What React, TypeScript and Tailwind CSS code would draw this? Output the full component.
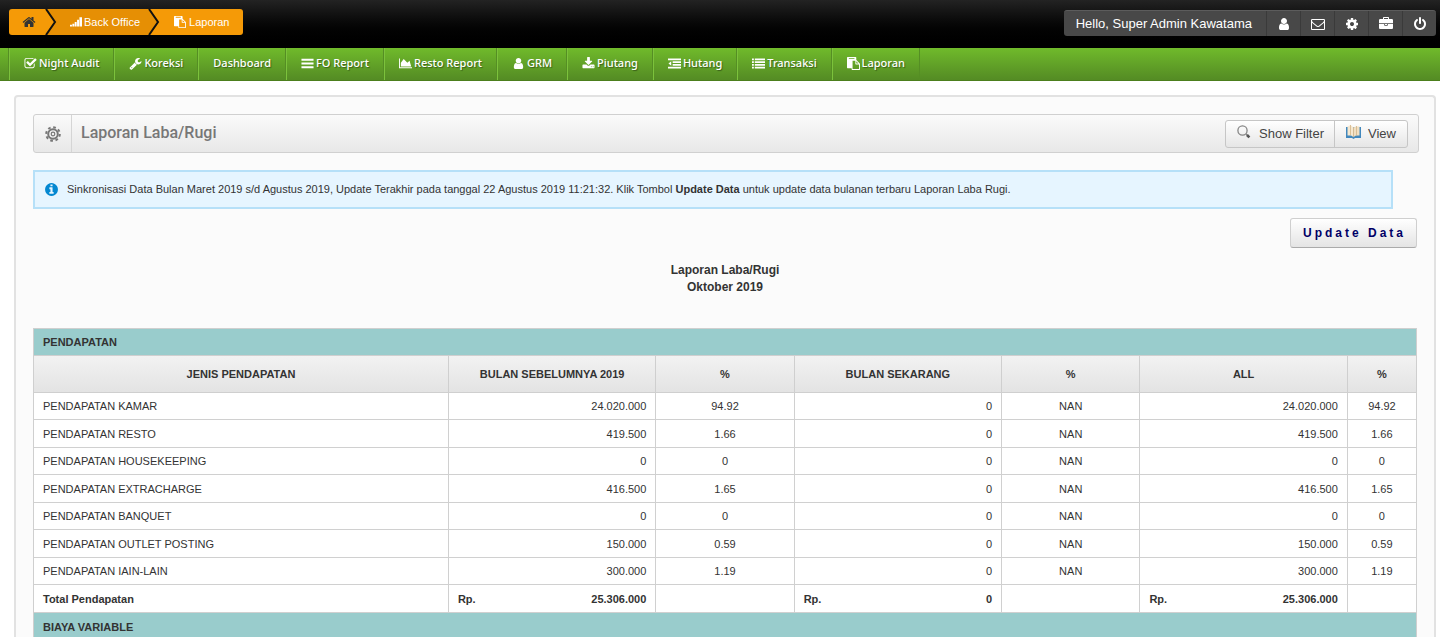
import React from 'react';
import { clsx } from 'clsx';

// Icon shapes, drawn on a 1792 grid
const ICONS = {
  home: 'M1472 992v480q0 26-19 45t-45 19h-384v-384h-256v384h-384q-26 0-45-19t-19-45v-480q0-1 .5-3t.5-3l575-474 575 474q1 2 1 6zm223-69l-62 74q-8 9-21 11h-3q-13 0-21-7l-692-577-692 577q-12 8-24 7-13-2-21-11l-62-74q-8-10-7-23.5t11-21.5l719-599q32-26 76-26t76 26l244 204v-195q0-14 9-23t23-9h192q14 0 23 9t9 23v408l219 182q10 8 11 21.5t-7 23.5z',
  signal: 'M0 1312h288v256h-288zM352 1152h288v416h-288zM704 896h288v672h-288zM1056 576h288v992h-288zM1408 192h384v1376h-384z',
  paste: 'M768 1664h896v-640h-416q-40 0-68-28t-28-68v-416h-384v1152zm256-1440v-64q0-13-9.5-22.5t-22.5-9.500h-704q-13 0-22.5 9.5t-9.5 22.5v64q0 13 9.5 22.5t22.5 9.500h704q13 0 22.5-9.5t9.5-22.5zm256 672h299l-299-299v299zm512 128v672q0 40-28 68t-68 28h-960q-40 0-68-28t-28-68v-160h-544q-40 0-68-28t-28-68v-1344q0-40 28-68t68-28h1088q40 0 68 28t28 68v328q21 13 36 28l408 408q28 28 48 76t20 88z',
  check: 'M1472 930v318q0 119-84.5 203.5t-203.5 84.5h-832q-119 0-203.5-84.5t-84.5-203.5v-832q0-119 84.5-203.5t203.5-84.5h832q63 0 117 25 15 7 18 23 3 17-9 29l-49 49q-10 10-23 10-3 0-9-2-23-6-45-6h-832q-66 0-113 47t-47 113v832q0 66 47 113t113 47h832q66 0 113-47t47-113v-254q0-13 9-22l64-64q10-10 23-10 6 0 12 3 20 8 20 29zm231-489l-814 814q-24 24-57 24t-57-24l-430-430q-24-24-24-57t24-57l110-110q24-24 57-24t57 24l263 263 647-647q24-24 57-24t57 24l110 110q24 24 24 57t-24 57z',
  wrench: 'M448 1472q0-26-19-45t-45-19-45 19-19 45 19 45 45 19 45-19 19-45zm644-420l-682 682q-37 37-90 37-52 0-91-37l-106-108q-38-36-38-90 0-53 38-91l681-681q39 98 114.5 173.5t173.5 114.5zm634-435q0 39-23 106-47 134-164.5 217.5t-258.5 83.5q-185 0-316.5-131.5t-131.5-316.5 131.5-316.5 316.5-131.5q58 0 121.5 16.5t107.5 46.5q16 11 16 28t-16 28l-293 169v224l193 107q5-3 79-48.5t135.5-81 70.5-35.5q15 0 23.5 10t8.5 25z',
  bars: 'M64 256h1664v256h-1664zM64 768h1664v256h-1664zM64 1280h1664v256h-1664z',
  area: 'M1792 1408v128h-1792v-1344h128v1216h1664zM1456 512l224 784h-1424v-496l392-512 504 512z',
  user: 'M1536 1399q0 109-62.5 187t-150.5 78h-854q-88 0-150.5-78t-62.5-187q0-85 8.5-160.5t31.5-152 58.5-131 94-89 134.5-34.5q131 128 313 128t313-128q76 0 134.5 34.5t94 89 58.5 131 31.5 152 8.5 160.5zm-256-887q0 159-112.5 271.5t-271.5 112.5-271.5-112.5-112.5-271.5 112.5-271.5 271.5-112.5 271.5 112.5 112.5 271.5z',
  download: 'M1344 1344q0-26-19-45t-45-19-45 19-19 45 19 45 45 19 45-19 19-45zm256 0q0-26-19-45t-45-19-45 19-19 45 19 45 45 19 45-19 19-45zm128-224v320q0 40-28 68t-68 28h-1472q-40 0-68-28t-28-68v-320q0-40 28-68t68-28h465l135 136q58 56 136 56t136-56l136-136h464q40 0 68 28t28 68zm-325-569q17 41-14 70l-448 448q-18 19-45 19t-45-19l-448-448q-31-29-14-70 17-39 59-39h256v-448q0-26 19-45t45-19h256q26 0 45 19t19 45v448h256q42 0 59 39z',
  outdent: 'M0 192h1792v256h-1792zM640 576h1152v256h-1152zM640 960h1152v256h-1152zM0 1344h1792v256h-1792zM448 576v640l-384-320z',
  list: 'M0 192h256v256h-256zM384 192h1408v256h-1408zM0 576h256v256h-256zM384 576h1408v256h-1408zM0 960h256v256h-256zM384 960h1408v256h-1408zM0 1344h256v256h-256zM384 1344h1408v256h-1408z',
  mail: 'M1664 1504v-768q-32 36-69 66-268 206-426 338-51 43-83 67t-86.5 48.5-102.5 24.5h-2q-48 0-102.5-24.5t-86.5-48.5-83-67q-158-132-426-338-37-30-69-66v768q0 13 9.5 22.5t22.5 9.500h1472q13 0 22.5-9.5t9.5-22.5zm0-1051v-24.5l-.5-13-3-12.5-5.5-9-9-7.5-14-2.500h-1472q-13 0-22.5 9.5t-9.5 22.5q0 168 147 284 193 152 401 317 6 5 35 29.5t46 37.5 44.5 31.5 50.5 27.5 43 9h2q20 0 43-9t50.5-27.5 44.5-31.5 46-37.5 35-29.5q208-165 401-317 54-43 100.5-115.5t46.5-131.5zm128-37v1088q0 66-47 113t-113 47h-1472q-66 0-113-47t-47-113v-1088q0-66 47-113t113-47h1472q66 0 113 47t47 113z',
  cog: 'M1152 896q0-106-75-181t-181-75-181 75-75 181 75 181 181 75 181-75 75-181zm512-109v222q0 12-8 23t-20 13l-185 28q-19 54-39 91 35 50 107 138 10 12 10 25t-9 23q-27 37-99 108t-94 71q-12 0-26-9l-138-108q-44 23-91 38-16 136-29 186-7 28-36 28h-222q-14 0-24.5-8.5t-11.5-21.5l-28-184q-49-16-90-37l-141 107q-10 9-25 9-14 0-25-11-126-114-165-168-7-10-7-23 0-12 8-23 15-21 51-66.5t54-70.5q-27-50-41-99l-183-27q-13-2-21-12.5t-8-23.5v-222q0-12 8-23t19-13l186-28q14-46 39-92-40-57-107-138-10-12-10-24 0-10 9-23 26-36 98.5-107.5t94.5-71.5q13 0 26 10l138 107q44-23 91-38 16-136 29-186 7-28 36-28h222q14 0 24.5 8.5t11.5 21.5l28 184q49 16 90 37l142-107q9-9 24-9 13 0 25 10 129 119 165 170 7 8 7 22 0 12-8 23-15 21-51 66.5t-54 70.5q26 50 41 98l183 28q13 2 21 12.5t8 23.5z',
  briefcase: 'M640 256h512v-128h-512v128zm1152 640v480q0 66-47 113t-113 47h-1472q-66 0-113-47t-47-113v-480h672v160q0 26 19 45t45 19h320q26 0 45-19t19-45v-160h672zm-768 0v128h-256v-128h256zm768-480v384h-1792v-384q0-66 47-113t113-47h352v-160q0-40 28-68t68-28h576q40 0 68 28t28 68v160h352q66 0 113 47t47 113z',
  power: 'M1664 896q0 156-61 298t-164 245-245 164-298 61-298-61-245-164-164-245-61-298q0-182 80.5-343t226.5-270q43-32 95.5-25t83.5 50q32 42 24.5 94.5t-49.5 84.5q-98 74-151.5 181t-53.5 228q0 104 40.5 198.5t109.5 163.5 163.5 109.5 198.5 40.5 198.5-40.5 163.5-109.5 109.5-163.5 40.5-198.5q0-121-53.5-228t-151.5-181q-42-32-49.5-84.5t24.5-94.5q31-43 84-50t95 25q146 109 226.5 270t80.5 343zm-640-768v640q0 52-38 90t-90 38-90-38-38-90v-640q0-52 38-90t90-38 90 38 38 90z',
  info: 'M1152 1376v-160q0-14-9-23t-23-9h-96v-512q0-14-9-23t-23-9h-320q-14 0-23 9t-9 23v160q0 14 9 23t23 9h96v320h-96q-14 0-23 9t-9 23v160q0 14 9 23t23 9h448q14 0 23-9t9-23zm-128-896v-160q0-14-9-23t-23-9h-192q-14 0-23 9t-9 23v160q0 14 9 23t23 9h192q14 0 23-9t9-23zm640 416q0 209-103 385.5t-279.5 279.5-385.5 103-385.5-103-279.5-279.5-103-385.5 103-385.5 279.5-279.5 385.5-103 385.5 103 279.5 279.5 103 385.5z',
};

type IconName = keyof typeof ICONS;

function Icon({ name, className }: { name: IconName; className?: string }) {
  return (
    <svg viewBox="0 0 1792 1792" fill="currentColor" aria-hidden="true" className={clsx('shrink-0', className)}>
      <path d={ICONS[name]} />
    </svg>
  );
}

interface NavItem {
  label: string;
  icon?: IconName;
}

const navItems: NavItem[] = [
  { label: 'Night Audit', icon: 'check' },
  { label: 'Koreksi', icon: 'wrench' },
  { label: 'Dashboard' },
  { label: 'FO Report', icon: 'bars' },
  { label: 'Resto Report', icon: 'area' },
  { label: 'GRM', icon: 'user' },
  { label: 'Piutang', icon: 'download' },
  { label: 'Hutang', icon: 'outdent' },
  { label: 'Transaksi', icon: 'list' },
  { label: 'Laporan', icon: 'paste' },
];

const userActions: { label: string; icon: IconName }[] = [
  { label: 'Profile', icon: 'user' },
  { label: 'Messages', icon: 'mail' },
  { label: 'Settings', icon: 'cog' },
  { label: 'Modules', icon: 'briefcase' },
  { label: 'Log out', icon: 'power' },
];

const headers = ['JENIS PENDAPATAN', 'BULAN SEBELUMNYA 2019', '%', 'BULAN SEKARANG', '%', 'ALL', '%'];

const rows = [
  { name: 'PENDAPATAN KAMAR', amount: '24.020.000', percent: '94.92' },
  { name: 'PENDAPATAN RESTO', amount: '419.500', percent: '1.66' },
  { name: 'PENDAPATAN HOUSEKEEPING', amount: '0', percent: '0' },
  { name: 'PENDAPATAN EXTRACHARGE', amount: '416.500', percent: '1.65' },
  { name: 'PENDAPATAN BANQUET', amount: '0', percent: '0' },
  { name: 'PENDAPATAN OUTLET POSTING', amount: '150.000', percent: '0.59' },
  { name: 'PENDAPATAN IAIN-LAIN', amount: '300.000', percent: '1.19' },
];

function Chevron() {
  return (
    <svg viewBox="0 0 12 26" className="h-[26px] w-3 shrink-0" aria-hidden="true">
      <path d="M0 0H12V26H0Z" fill="#e68f04" />
      <path d="M0 0L10 13L0 26Z" fill="#f59a07" />
      <path d="M1 0L10 13L1 26" fill="none" stroke="#111" strokeWidth="2" />
    </svg>
  );
}

function ChevronLast() {
  return (
    <svg viewBox="0 0 12 26" className="h-[26px] w-3 shrink-0" aria-hidden="true">
      <path d="M0 0H12V26H0Z" fill="#f59a07" />
      <path d="M0 0L10 13L0 26Z" fill="#e68f04" />
      <path d="M1 0L10 13L1 26" fill="none" stroke="#111" strokeWidth="2" />
    </svg>
  );
}

function TopBar() {
  return (
    <header className="flex h-12 items-start justify-between bg-linear-to-b from-[#232323] to-black pr-1 pl-[9px]">
      <nav aria-label="Breadcrumb" className="mt-[9px] flex h-[26px] items-center overflow-hidden rounded-[3px] bg-[#f59a07] text-[11px] text-white">
        <a href="#home" aria-label="Home" className="flex w-9 justify-center pl-1 text-[#333]">
          <Icon name="home" className="size-[14px]" />
        </a>
        <Chevron />
        <a href="#back-office" className="flex h-full items-center gap-[2px] bg-[#e68f04] pr-2 pl-[13px]">
          <Icon name="signal" className="size-[12px]" />
          Back Office
        </a>
        <ChevronLast />
        <a href="#laporan" className="flex h-full items-center gap-[3px] pr-[14px] pl-[14px]">
          <Icon name="paste" className="size-[12px]" />
          Laporan
        </a>
      </nav>
      <div className="mt-[10px] flex h-[26px] items-center rounded-[3px] border-t border-[#5c5c5c] bg-[#484848] text-[13px] text-white">
        <span className="pr-[14px] pl-3">Hello, Super Admin Kawatama</span>
        {userActions.map((action) => (
          <button
            key={action.label}
            type="button"
            aria-label={action.label}
            className="flex h-full w-[34px] items-center justify-center border-l border-[#3a3a3a]"
          >
            <Icon name={action.icon} className="size-[14px]" />
          </button>
        ))}
      </div>
    </header>
  );
}

function MainNav() {
  return (
    <nav
      aria-label="Main"
      className="flex h-[33px] border-b border-[#4c7f1d] bg-linear-to-b from-[#70ba2b] to-[#548b24] pl-2 font-['Noto_Sans',sans-serif] text-[11px] font-medium text-white"
    >
      <div className="flex border-l border-[#558e24]">
        {navItems.map((item) => (
          <a
            key={item.label}
            href="#menu"
            className="flex items-center gap-[2px] border-r border-l border-r-[#558e24] border-l-[#7cc23c] px-[14px] pb-[2px] text-shadow-[1px_1px_1px_#00000060]"
          >
            {item.icon && <Icon name={item.icon} className="size-[13px]" />}
            {item.label}
          </a>
        ))}
      </div>
    </nav>
  );
}

function PageHeader() {
  return (
    <div className="flex h-[39px] items-center rounded-[3px] border border-[#d0d0d0] bg-linear-to-b from-[#fafafa] to-[#e8e8e8] pr-[10px]">
      <div className="flex h-full w-[38px] items-center justify-center border-r border-[#d5d5d5] text-[#777]">
        <svg viewBox="0 0 16 16" className="size-4" fill="none" stroke="currentColor" aria-hidden="true">
          <circle cx="8" cy="8" r="4.8" strokeWidth="2" />
          <circle cx="8" cy="8" r="6.8" strokeWidth="2" strokeDasharray="2.7 2.64" />
          <circle cx="8" cy="8" r="1.8" strokeWidth="1.2" />
        </svg>
      </div>
      <h1 className="grow pb-[2px] pl-[9px] font-['Roboto',sans-serif] text-[16px] font-medium text-[#777]">Laporan Laba/Rugi</h1>
      <div className="flex h-[28px] rounded-[3px] border border-[#c6c6c6] bg-linear-to-b from-white to-[#e6e6e6] text-[13px] text-[#444]">
        <button type="button" className="flex items-center gap-2 border-r border-[#c6c6c6] pr-[10px] pl-[11px]">
          <svg viewBox="0 0 14 14" className="mb-[3px] size-[14px]" fill="none" stroke="#858585" aria-hidden="true">
            <circle cx="5.5" cy="5.5" r="4.6" strokeWidth="1.3" />
            <path d="M9 9l1.5 1.5" strokeWidth="1.2" />
            <path d="M10 10l2.4 2.4" stroke="#555" strokeWidth="2.6" />
          </svg>
          Show Filter
        </button>
        <button type="button" className="flex items-center gap-[7px] pr-[11px] pl-[11px]">
          <svg viewBox="0 0 15 14" className="mb-[3px] h-[14px] w-[15px]" aria-hidden="true">
            <path d="M0 2h15v11H9l-1.500 1L6 13H0z" fill="#4288bd" />
            <path d="M1.500 1.500L4.500 0L7.500 2.500V12L5 10.500H1.500z" fill="#f6e8d0" />
            <path d="M13.500 1.500H10L7.500 2.500V12L10 10.500H13.500z" fill="#f1dfc2" />
            <path d="M4.500 0v10M7.500 2.500v9.500M10.500 1v9.500" fill="none" stroke="#d3b588" strokeWidth="0.8" />
          </svg>
          View
        </button>
      </div>
    </div>
  );
}

function ReportTable() {
  const amount = 'border-r border-[#d0d0d0] px-[9px] text-right';
  const percent = 'border-r border-[#d0d0d0] px-2 text-center';

  return (
    <table className="w-full table-fixed border-separate border-spacing-0 border-t border-l border-[#cfcfcf] bg-white text-[11px] leading-4 text-[#333]">
      <colgroup>
        <col className="w-[30%]" />
        <col className="w-[15%]" />
        <col className="w-[10%]" />
        <col className="w-[15%]" />
        <col className="w-[10%]" />
        <col className="w-[15%]" />
        <col className="w-[5%]" />
      </colgroup>
      <thead>
        <tr className="h-[27px] bg-[#99cccc]">
          <th colSpan={7} className="border-r border-b border-[#cfcfcf] px-[9px] text-left">PENDAPATAN</th>
        </tr>
        <tr className="h-[37px] bg-linear-to-b from-[#f2f2f2] to-[#e3e3e3]">
          {headers.map((header, index) => (
            <th key={index} scope="col" className="border-r border-b border-[#cfcfcf]">{header}</th>
          ))}
        </tr>
      </thead>
      <tbody>
        {rows.map((row) => (
          <tr key={row.name} className="h-[27px] even:h-[28px] *:border-b">
            <td className="border-r border-[#d0d0d0] px-[9px]">{row.name}</td>
            <td className={amount}>{row.amount}</td>
            <td className={percent}>{row.percent}</td>
            <td className={amount}>0</td>
            <td className={percent}>NAN</td>
            <td className={amount}>{row.amount}</td>
            <td className={percent}>{row.percent}</td>
          </tr>
        ))}
        <tr className="h-[28px] font-bold *:border-b">
          <td className="border-r border-[#d0d0d0] px-[9px]">Total Pendapatan</td>
          {['25.306.000', '0', '25.306.000'].map((total, index) => (
            <React.Fragment key={index}>
              <td className={amount}>
                <div className="flex justify-between">
                  <span>Rp.</span>
                  <span>{total}</span>
                </div>
              </td>
              <td className={percent} />
            </React.Fragment>
          ))}
        </tr>
        <tr className="h-[27px] bg-[#99cccc]">
          <th colSpan={7} className="border-r border-[#cfcfcf] px-[9px] text-left">BIAYA VARIABLE</th>
        </tr>
      </tbody>
    </table>
  );
}

export default function App() {
  return (
    <div className="min-h-screen bg-white font-['Liberation_Sans',Arial,sans-serif]">
      <TopBar />
      <MainNav />
      <main className="mt-[14px] mr-1 ml-[14px] rounded-t-[4px] border-2 border-b-0 border-[#e2e2e2] bg-[#fbfbfb] pt-[17px] pr-[15px] pl-[17px]">
        <PageHeader />

        {/* Sync notice */}
        <div className="mt-[17px] mr-[26px] flex h-[39px] items-center gap-2 border-2 border-[#b6e0f8] bg-[#e6f5ff] pl-[9px] text-[11px] text-[#333]">
          <Icon name="info" className="size-[15px] text-[#0488d1]" />
          <p>
            Sinkronisasi Data Bulan Maret 2019 s/d Agustus 2019, Update Terakhir pada tanggal 22 Agustus 2019 11:21:32. Klik Tombol{' '}
            <strong>Update Data</strong> untuk update data bulanan terbaru Laporan Laba Rugi.
          </p>
        </div>

        <div className="pr-[2px]">
          <div className="mt-[9px] flex justify-end">
            <button
              type="button"
              className="h-[30px] rounded-[3px] border border-[#cfcfcf] border-b-[#aaa] bg-linear-to-b from-white to-[#e4e4e4] pr-[10px] pl-3 text-[12px] font-bold tracking-[3px] text-[#000066]"
            >
              Update Data
            </button>
          </div>
          <h2 className="mt-[14px] mb-[32px] text-center text-[12px] leading-[17px] font-bold text-[#333]">
            Laporan Laba/Rugi
            <br />
            Oktober 2019
          </h2>
          <ReportTable />
        </div>
      </main>
    </div>
  );
}
